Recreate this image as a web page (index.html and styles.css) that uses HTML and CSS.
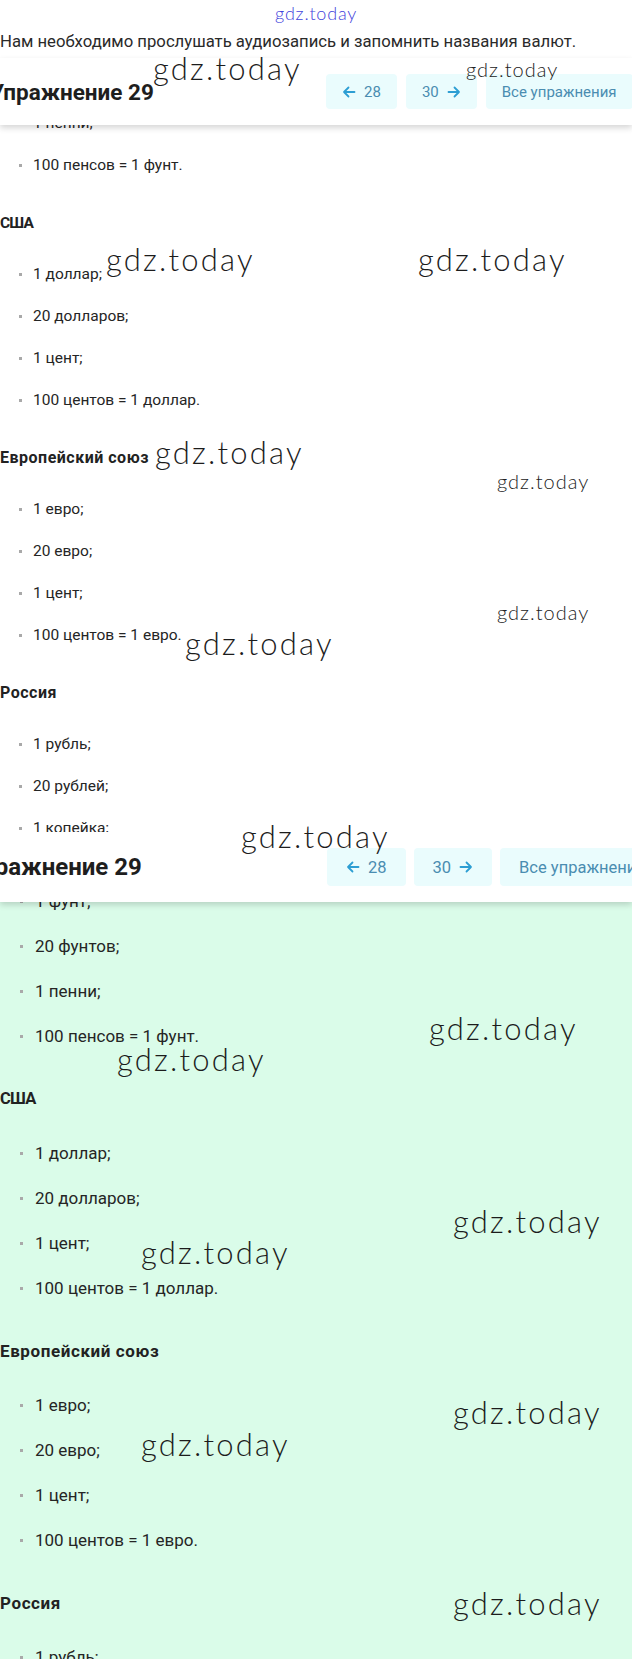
FILE: index.html
```html
<!DOCTYPE html>
<html lang="ru">
<head>
<meta charset="utf-8">
<title>Упражнение 29</title>
<link rel="stylesheet" href="styles.css">
</head>
<body>
<div class="page">
  <section class="panel panel-a">
    <p class="intro">Нам необходимо прослушать аудиозапись и запомнить названия валют.</p>
    <header class="bar">
      <h1 class="title">Упражнение 29</h1>
      <nav class="btns">
        <a class="btn"><svg class="arr" viewBox="0 0 14 14"><path d="M12.5 7H2M6.5 2.5L2 7l4.5 4.5"/></svg>28</a>
        <a class="btn">30<svg class="arr" viewBox="0 0 14 14"><path d="M1.5 7H12M7.5 2.5L12 7l-4.5 4.5"/></svg></a>
        <a class="btn">Все упражнения</a>
      </nav>
    </header>
    <div class="content">
      <div class="cut"><ul class="list"><li>1 пенни;</li></ul></div>
      <ul class="list"><li>100 пенсов = 1 фунт.</li></ul>
      <h3 class="group cond">США</h3>
      <ul class="list">
        <li>1 доллар;</li>
        <li>20 долларов;</li>
        <li>1 цент;</li>
        <li>100 центов = 1 доллар.</li>
      </ul>
      <h3 class="group">Европейский союз</h3>
      <ul class="list">
        <li>1 евро;</li>
        <li>20 евро;</li>
        <li>1 цент;</li>
        <li>100 центов = 1 евро.</li>
      </ul>
      <h3 class="group">Россия</h3>
      <ul class="list">
        <li>1 рубль;</li>
        <li>20 рублей;</li>
        <li>1 копейка;</li>
      </ul>
    </div>
  </section>

  <section class="panel panel-b">
    <header class="bar">
      <h1 class="title">Упражнение 29</h1>
      <nav class="btns">
        <a class="btn"><svg class="arr" viewBox="0 0 14 14"><path d="M12.5 7H2M6.5 2.5L2 7l4.5 4.5"/></svg>28</a>
        <a class="btn">30<svg class="arr" viewBox="0 0 14 14"><path d="M1.5 7H12M7.5 2.5L12 7l-4.5 4.5"/></svg></a>
        <a class="btn">Все упражнения</a>
      </nav>
    </header>
    <div class="content">
      <div class="cut"><ul class="list"><li>1 фунт;</li></ul></div>
      <ul class="list">
        <li>20 фунтов;</li>
        <li>1 пенни;</li>
        <li>100 пенсов = 1 фунт.</li>
      </ul>
      <h3 class="group cond">США</h3>
      <ul class="list">
        <li>1 доллар;</li>
        <li>20 долларов;</li>
        <li>1 цент;</li>
        <li>100 центов = 1 доллар.</li>
      </ul>
      <h3 class="group">Европейский союз</h3>
      <ul class="list">
        <li>1 евро;</li>
        <li>20 евро;</li>
        <li>1 цент;</li>
        <li>100 центов = 1 евро.</li>
      </ul>
      <h3 class="group">Россия</h3>
      <ul class="list">
        <li>1 рубль;</li>
      </ul>
    </div>
  </section>

  <span class="wm wm-blue">gdz.today</span>
  <span class="wm big w1">gdz.today</span>
  <span class="wm small w2">gdz.today</span>
  <span class="wm big w3">gdz.today</span>
  <span class="wm big w4">gdz.today</span>
  <span class="wm big w5">gdz.today</span>
  <span class="wm small w6">gdz.today</span>
  <span class="wm small w7">gdz.today</span>
  <span class="wm big w8">gdz.today</span>
  <span class="wm big w9">gdz.today</span>
  <span class="wm big w10">gdz.today</span>
  <span class="wm big w11">gdz.today</span>
  <span class="wm big w12">gdz.today</span>
  <span class="wm big w13">gdz.today</span>
  <span class="wm big w14">gdz.today</span>
  <span class="wm big w15">gdz.today</span>
  <span class="wm big w16">gdz.today</span>
</div>
</body>
</html>
```

FILE: styles.css
```css
* { box-sizing: border-box; }
html, body { margin: 0; padding: 0; }
body {
  width: 632px;
  height: 1659px;
  overflow: hidden;
  background: #ffffff;
  font-family: Roboto, "Liberation Sans", Arial, sans-serif;
  color: #252525;
}
.page {
  position: relative;
  width: 632px;
  height: 1659px;
  overflow: hidden;
}
.panel {
  position: relative;
  overflow: hidden;
}
.panel-a {
  height: 832px;
  background: #ffffff;
}
.panel-b {
  height: 827px;
  background: #dafce9;
}

.intro {
  margin: 30px 0 0 0;
  font-size: 16.7px;
  line-height: 24px;
  color: #2a2a2a;
  white-space: nowrap;
}

.bar {
  position: relative;
  z-index: 2;
  display: grid;
  align-items: center;
  background: #ffffff;
  box-shadow: 0 3px 6px rgba(0, 0, 0, 0.16);
}
.panel-a .bar {
  margin-top: 4px;
  height: 67px;
  grid-template-columns: 326px max-content;
}
.panel-b .bar {
  height: 70px;
  grid-template-columns: 327px max-content;
}
.title {
  margin: 0;
  font-weight: 700;
  color: #1e1e1e;
  white-space: nowrap;
}
.panel-a .title { font-size: 22.5px; margin-left: -10px; }
.panel-b .title { font-size: 24px; margin-left: -33px; }

.btns {
  display: flex;
  gap: 9px;
}
.panel-b .btns { gap: 8px; }
.btn {
  display: inline-flex;
  align-items: center;
  gap: 8px;
  padding: 0 16px;
  background: #eafcfd;
  border-radius: 4px;
  color: #4a8db1;
  white-space: nowrap;
}
.panel-a .btn { height: 35px; font-size: 15px; }
.panel-b .btn { height: 38px; font-size: 16.5px; padding: 0 19px; }
.arr {
  width: 14px;
  height: 14px;
  fill: none;
  stroke: #2d9ed3;
  stroke-width: 1.8;
  stroke-linecap: round;
  stroke-linejoin: round;
}

.content { position: relative; z-index: 1; }

.list {
  list-style: none;
  margin: 0;
  padding: 0;
}
.list li {
  display: flex;
  align-items: center;
  white-space: nowrap;
}
.list li::before {
  content: "";
  flex: 0 0 auto;
  width: 3px;
  height: 3px;
  background: #a9a9a9;
}
.panel-a .list li {
  font-size: 15.5px;
  line-height: 22px;
  padding: 10px 0;
}
.panel-a .list li::before { margin: 0 11px 0 19px; }
.panel-b .list li {
  font-size: 17px;
  line-height: 24px;
  padding: 10.5px 0;
}
.panel-b .list li::before { margin: 0 12px 0 20px; }

.cut {
  display: flex;
  flex-direction: column;
  justify-content: flex-end;
  overflow: hidden;
}
.panel-a .cut { height: 19px; }
.panel-b .cut { height: 21.5px; }

.group {
  margin: 0;
  font-weight: 700;
  color: #222;
  white-space: nowrap;
}
.panel-a .group {
  font-size: 16px;
  letter-spacing: 0.5px;
  line-height: 22px;
  margin: 26px 0 19px;
}
.panel-b .group {
  font-size: 17px;
  letter-spacing: 0.6px;
  line-height: 24px;
  margin: 28.5px 0 19.5px;
}
.panel-a .group.cond { letter-spacing: -0.8px; font-size: 15.5px; }
.panel-b .group.cond { letter-spacing: -0.8px; font-size: 16.5px; }

/* watermarks lying over the content */
.wm {
  position: absolute;
  z-index: 5;
  font-family: Lato, "Open Sans", "DejaVu Sans", sans-serif;
  font-weight: 300;
  line-height: 1;
  color: #1c1c1c;
  white-space: nowrap;
  pointer-events: none;
}
.wm.big { font-size: 31px; letter-spacing: 2.2px; }
.wm.small { font-size: 20px; letter-spacing: 1px; color: #222; }
.wm-blue {
  left: 275px;
  top: 4px;
  font-size: 18px;
  letter-spacing: 0.8px;
  color: #4343dc;
}
.w1 { left: 153px; top: 53px; }
.w2 { left: 466px; top: 59px; }
.w3 { left: 106px; top: 244px; }
.w4 { left: 418px; top: 244px; }
.w5 { left: 155px; top: 437px; }
.w6 { left: 497px; top: 471px; }
.w7 { left: 497px; top: 602px; }
.w8 { left: 185px; top: 628px; }
.w9 { left: 241px; top: 821px; }
.w10 { left: 429px; top: 1013px; }
.w11 { left: 117px; top: 1044px; }
.w12 { left: 453px; top: 1206px; }
.w13 { left: 141px; top: 1237px; }
.w14 { left: 453px; top: 1397px; }
.w15 { left: 141px; top: 1429px; }
.w16 { left: 453px; top: 1588px; }
```
